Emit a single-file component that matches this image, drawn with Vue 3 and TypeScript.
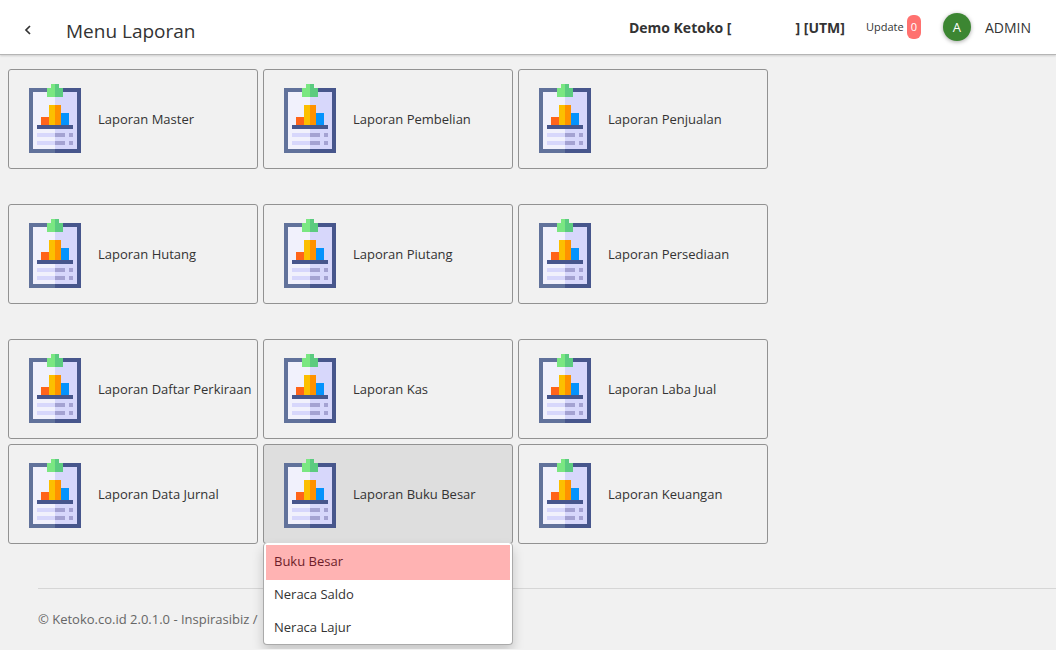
<script setup lang="ts">
import { ref } from 'vue'

interface Report {
  label: string
  items?: string[]
}

const groups: Report[][] = [
  [{ label: 'Laporan Master' }, { label: 'Laporan Pembelian' }, { label: 'Laporan Penjualan' }],
  [{ label: 'Laporan Hutang' }, { label: 'Laporan Piutang' }, { label: 'Laporan Persediaan' }],
  [
    { label: 'Laporan Daftar Perkiraan' },
    { label: 'Laporan Kas' },
    { label: 'Laporan Laba Jual' },
    { label: 'Laporan Data Jurnal' },
    { label: 'Laporan Buku Besar', items: ['Buku Besar', 'Neraca Saldo', 'Neraca Lajur'] },
    { label: 'Laporan Keuangan' },
  ],
]

const opened = ref<string>('Laporan Buku Besar')
const current = ref<string>('Buku Besar')

function toggle(label: string): void {
  opened.value = opened.value === label ? '' : label
}
</script>

<template>
  <div class="app">
    <header class="bar">
      <button class="back" type="button" aria-label="Kembali">
        <svg width="8" height="10" viewBox="0 0 8 10" aria-hidden="true">
          <path d="M6 1 L2 5 L6 9" fill="none" stroke="#333" stroke-width="1.7" />
        </svg>
      </button>
      <h1>Menu Laporan</h1>
      <div class="company"><span>Demo Ketoko [</span><span>] [UTM]</span></div>
      <div class="update">Update<span class="count">0</span></div>
      <button class="user" type="button">
        <span class="avatar">A</span>
        <span class="name">ADMIN</span>
      </button>
    </header>

    <main>
      <section v-for="(group, i) in groups" :key="i" class="group">
        <div v-for="report in group" :key="report.label" class="cell">
          <button
            class="card"
            :class="{ open: opened === report.label }"
            type="button"
            @click="toggle(report.label)"
          >
            <svg class="icon" viewBox="0 0 70 70" aria-hidden="true">
              <path fill="#61729b" d="M9 4h26v65H9z" />
              <path fill="#47568c" d="M35 4h26v65H35z" />
              <path fill="#f1f1fc" d="M13 8h22v57H13z" />
              <path fill="#d7d7fb" d="M35 8h22v57H35z" />
              <path fill="#7ae782" d="M31 0h4v13h-8V4h4z" />
              <path fill="#5bcb80" d="M35 0h4v4h4v9h-8z" />
              <path fill="#ff641a" d="M21 33h8v8h-8z" />
              <path fill="#fcbf00" d="M29 21h6v20h-6z" />
              <path fill="#ff9100" d="M35 21h6v20h-6z" />
              <path fill="#0593fc" d="M41 29h8v12h-8z" />
              <path fill="#47568c" d="M17 41h36v4H17z" />
              <path fill="#d7d7fb" d="M17 49h18v4H17zM17 57h18v4H17z" />
              <path fill="#a4a2d2" d="M35 49h10v4H35zM35 57h10v4H35zM49 49h4v4h-4zM49 57h4v4h-4z" />
            </svg>
            <span>{{ report.label }}</span>
          </button>
          <ul v-if="report.items && opened === report.label" class="menu">
            <li v-for="item in report.items" :key="item">
              <button type="button" :class="{ current: current === item }" @click="current = item">
                {{ item }}
              </button>
            </li>
          </ul>
        </div>
      </section>
    </main>

    <footer>© Ketoko.co.id 2.0.1.0 - Inspirasibiz /</footer>
  </div>
</template>

<style>
body {
  margin: 0;
  background: #f1f1f1;
}
</style>

<style scoped>
.app {
  font-family: "Open Sans", "Noto Sans", sans-serif;
  font-size: 13px;
  line-height: 20px;
  color: #333;
}
button {
  font: inherit;
  color: inherit;
  border: 0;
  padding: 0;
  background: none;
  cursor: pointer;
}
.bar {
  display: flex;
  align-items: center;
  height: 54px;
  padding-right: 25px;
  background: #fff;
  border-bottom: 1px solid #b5b5b5;
  box-shadow: 0 1px 2px rgba(0, 0, 0, 0.15);
}
.back {
  display: flex;
  align-items: center;
  justify-content: center;
  width: 56px;
  height: 54px;
  padding-top: 6px;
}
h1 {
  flex: 1;
  margin: 0;
  padding: 8px 0 0 10px;
  font-size: 19px;
  line-height: 28px;
  font-weight: 400;
}
.company {
  display: flex;
  gap: 64px;
  padding-top: 2px;
  font-size: 14px;
  font-weight: 700;
  white-space: pre;
}
.update {
  display: flex;
  align-items: center;
  gap: 3px;
  margin-left: 21px;
  font-size: 11px;
}
.count {
  padding: 2px 4px;
  border-radius: 6px;
  background: #ff716f;
  color: #fff;
}
.user {
  display: flex;
  align-items: center;
  gap: 14px;
  margin-left: 22px;
  font-size: 14px;
}
.name {
  padding-top: 2px;
}
.avatar {
  width: 28px;
  height: 28px;
  border-radius: 50%;
  line-height: 28px;
  text-align: center;
  font-size: 13px;
  color: #fff;
  background: #3c8632;
  box-shadow: 0 1px 4px rgba(0, 0, 0, 0.35);
}
main {
  display: flex;
  flex-direction: column;
  gap: 35px;
  padding: 14px 8px 0;
}
.group {
  display: grid;
  grid-template-columns: repeat(3, 250px);
  gap: 5px;
}
.cell {
  position: relative;
}
.card {
  display: flex;
  align-items: center;
  gap: 8px;
  width: 100%;
  height: 100px;
  padding: 0 0 0 11px;
  border: 1px solid #929292;
  border-radius: 3px;
  white-space: nowrap;
  text-align: left;
}
.card.open {
  background: #dedede;
}
.icon {
  flex: none;
  width: 70px;
  height: 70px;
}
.menu {
  position: absolute;
  z-index: 1;
  top: 99px;
  left: 0;
  right: 0;
  margin: 0;
  padding: 2px 2px 0;
  list-style: none;
  background: #fff;
  border: 1px solid #aaa;
  border-top: 0;
  border-radius: 4px;
  box-shadow: 0 6px 12px rgba(0, 0, 0, 0.18);
}
.menu button {
  display: block;
  width: 100%;
  height: 33px;
  padding: 0 8px 2px;
  text-align: left;
}
.menu .current {
  height: 35px;
  padding-bottom: 4px;
  margin-bottom: -2px;
  color: #6d1d29;
  background: #ffb3b3;
}
footer {
  margin: 44px 0 0 38px;
  padding: 20px 0;
  border-top: 1px solid #d6d6d6;
  color: #666;
}
</style>
